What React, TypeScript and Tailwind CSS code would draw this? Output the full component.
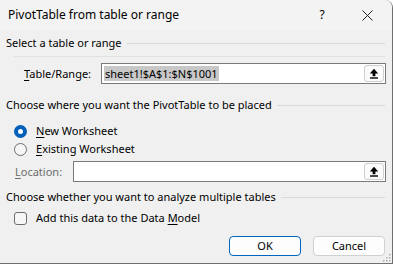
import { ReactNode } from "react";

const font = { fontFamily: "'Noto Sans', 'Open Sans', sans-serif" };

function UploadIcon() {
  return (
    <svg width="10" height="11" viewBox="0 0 10 11">
      <path d="M5 0.8 L9.2 5.4 H6.4 V8.2 H3.6 V5.4 H0.8 Z" fill="#000" />
      <rect x="1" y="9.3" width="8" height="1.4" fill="#000" />
    </svg>
  );
}

function RefInput({ children }: { children?: ReactNode }) {
  return (
    <div className="flex h-[21px] flex-1 items-center border border-[#7a7a7a] bg-white pl-[2px] pr-[1px]">
      <div className="flex-1 whitespace-nowrap">{children}</div>
      <button className="flex h-[17px] w-[20px] items-center justify-center rounded-[3px] border border-[#cfcfcf] bg-[#fbfbfb]">
        <UploadIcon />
      </button>
    </div>
  );
}

function SectionHeader({ title }: { title: string }) {
  return (
    <div className="flex h-[14px] items-center gap-[5px] pl-[6px] pr-[7px]">
      <span className="whitespace-nowrap">{title}</span>
      <div className="h-px flex-1 bg-[#d9d9d9]" />
    </div>
  );
}

function U({ children }: { children: ReactNode }) {
  return <span className="underline underline-offset-2">{children}</span>;
}

export default function App() {
  return (
    <div
      className="relative h-[264px] w-[393px] overflow-hidden rounded-tr-[8px] border-r border-b border-[#6f6f6f] bg-[#f0f0f0] text-[11px] leading-[14px] text-black"
      style={font}
    >
      {/* title bar */}
      <div className="flex h-[30px] items-center bg-[#f3f3f3] pl-[8px]">
        <span className="flex-1 text-[12px]">PivotTable from table or range</span>
        <span className="w-[10px] text-center text-[12px]">?</span>
        <span className="ml-[34px] mr-[19px] flex w-[12px] items-center justify-center">
          <svg width="11" height="11" viewBox="0 0 11 11">
            <path d="M0.5 0.5 L10.5 10.5 M10.5 0.5 L0.5 10.5" stroke="#222" strokeWidth="1" />
          </svg>
        </span>
      </div>

      <div className="mt-[6px]">
        <SectionHeader title="Select a table or range" />
      </div>
      <div className="mx-[14px] mr-[7px] h-[7px] border-b border-[#e2e2e2]" />

      <div className="mt-[6px] flex items-center pl-[24px] pr-[6px]">
        <span className="w-[77px]">
          <U>T</U>able/Range:
        </span>
        <RefInput>
          <span className="bg-[#c8c8c8] px-[1px]">sheet1!$A$1:$N$1001</span>
        </RefInput>
      </div>

      <div className="mt-[14px]">
        <SectionHeader title="Choose where you want the PivotTable to be placed" />
      </div>

      <div className="mt-[10px] flex flex-col pl-[14px]">
        <div className="flex h-[18px] items-center gap-[9px]">
          <div className="flex h-[13px] w-[13px] items-center justify-center rounded-full bg-[#005fb8]">
            <div className="h-[5px] w-[5px] rounded-full bg-white" />
          </div>
          <span>
            <U>N</U>ew Worksheet
          </span>
        </div>
        <div className="flex h-[18px] items-center gap-[9px]">
          <div className="h-[13px] w-[13px] rounded-full border border-[#6e6e6e] bg-[#f6f6f6]" />
          <span>
            <U>E</U>xisting Worksheet
          </span>
        </div>
      </div>

      <div className="mt-[3px] flex items-center pl-[15px] pr-[6px]">
        <span className="w-[58px] text-[#6d6d6d]">
          <U>L</U>ocation:
        </span>
        <RefInput />
      </div>

      <div className="mt-[8px]">
        <SectionHeader title="Choose whether you want to analyze multiple tables" />
      </div>

      <div className="mt-[5px] flex h-[18px] items-center gap-[9px] pl-[14px]">
        <div className="h-[13px] w-[13px] rounded-[3px] border border-[#6e6e6e] bg-[#f6f6f6]" />
        <span>
          Add this data to the Data <U>M</U>odel
        </span>
      </div>

      <div className="mt-[9px] flex justify-end gap-[12px] pr-[7px]">
        <button className="h-[20px] w-[72px] rounded-[4px] border border-[#0067c0] bg-[#fdfdfd]">OK</button>
        <button className="h-[20px] w-[72px] rounded-[4px] border border-[#d0d0d0] bg-[#fdfdfd]">Cancel</button>
      </div>

      {/* resize grip */}
      <svg className="absolute bottom-[1px] right-[1px]" width="8" height="8" viewBox="0 0 8 8">
        <rect x="6" y="0" width="1.5" height="1.5" fill="#b0b0b0" />
        <rect x="3" y="3" width="1.5" height="1.5" fill="#b0b0b0" />
        <rect x="6" y="3" width="1.5" height="1.5" fill="#b0b0b0" />
        <rect x="0" y="6" width="1.5" height="1.5" fill="#b0b0b0" />
        <rect x="3" y="6" width="1.5" height="1.5" fill="#b0b0b0" />
        <rect x="6" y="6" width="1.5" height="1.5" fill="#b0b0b0" />
      </svg>
    </div>
  );
}
